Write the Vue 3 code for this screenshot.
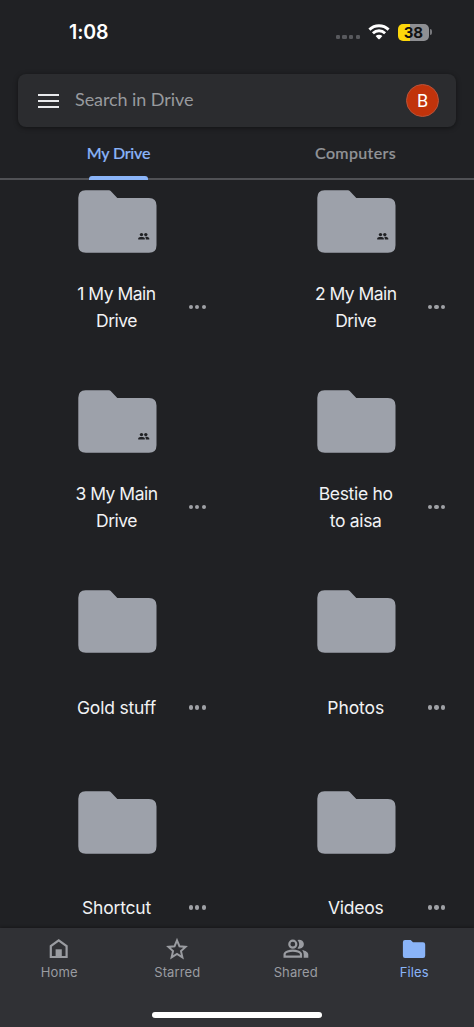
<script setup>
const folders = [
  { lines: [{ text: '1 My Main', spacing: -0.5 }, { text: 'Drive', spacing: -0.5 }], shared: true },
  { lines: [{ text: '2 My Main', spacing: -0.55 }, { text: 'Drive', spacing: -0.5 }], shared: true },
  { lines: [{ text: '3 My Main', spacing: -0.5 }, { text: 'Drive', spacing: -0.5 }], shared: true },
  { lines: [{ text: 'Bestie ho', spacing: -0.3 }, { text: 'to aisa', spacing: -0.35 }], shared: false },
  { lines: [{ text: 'Gold stuff', spacing: -0.2 }], shared: false },
  { lines: [{ text: 'Photos', spacing: -0.1 }], shared: false },
  { lines: [{ text: 'Shortcut', spacing: -0.2 }], shared: false },
  { lines: [{ text: 'Videos', spacing: -0.25 }], shared: false },
]
</script>

<template>
  <div class="screen">
    <header class="status">
      <span class="time">1:08</span>
      <div class="indicators">
        <div class="signal"><i></i><i></i><i></i><i></i></div>
        <svg class="wifi" width="22" height="16" viewBox="0 0 22 16">
          <g fill="none" stroke="#fff" stroke-width="2.9">
            <path d="M1.4 5.6C6.8.4 15.2.4 20.6 5.6" />
            <path d="M4.9 9.2C8.4 6 13.6 6 17.1 9.2" />
          </g>
          <path d="M7.6 11.9C9.5 10.2 12.5 10.2 14.4 11.9L11.7 14.9Q11 15.6 10.3 14.9Z" fill="#fff" />
        </svg>
        <div class="battery"><span>38</span></div>
        <div class="cap"></div>
      </div>
    </header>

    <div class="search">
      <div class="menu"><i></i><i></i><i></i></div>
      <span class="placeholder">Search in Drive</span>
      <div class="avatar">B</div>
    </div>

    <nav class="tabs">
      <div class="tab active"><span>My Drive</span></div>
      <div class="tab"><span>Computers</span></div>
    </nav>

    <main class="grid">
      <section v-for="(f, i) in folders" :key="i" class="cell">
        <svg class="folder" width="79" height="63" viewBox="0 0 79 63">
          <path d="M7.5 0.3H31Q32 0.3 32.7 1L39.3 8H71Q78.5 8 78.5 15.5V55.2Q78.5 62.7 71 62.7H7.8Q0.3 62.7 0.3 55.2V7.8Q0.3 0.3 7.5 0.3Z" fill="#9da1aa" />
          <g v-if="f.shared" fill="#202124">
            <circle cx="63.5" cy="44.6" r="1.7" />
            <circle cx="67.8" cy="44.6" r="1.7" />
            <path d="M60.2 49.6V48.6C60.2 47.2 62.2 46.9 63.5 46.9S66.8 47.2 66.8 48.6V49.6Z" />
            <path d="M67.8 49.6V48.4Q67.8 47.5 67.2 46.9C68.7 46.7 71.3 47.2 71.3 48.6V49.6Z" />
          </g>
        </svg>
        <div class="caption">
          <div class="name">
            <div v-for="l in f.lines" :key="l.text" :style="{ letterSpacing: l.spacing + 'px' }">{{ l.text }}</div>
          </div>
          <div class="more"><i></i><i></i><i></i></div>
        </div>
      </section>
    </main>

    <footer class="bottom">
      <div class="items">
        <div class="item">
          <svg width="28" height="24" viewBox="0 0 28 24">
            <path d="M5.8 20V9L13.7 3.3L21.6 9V20Z" fill="none" stroke="currentColor" stroke-width="2.2" />
            <path d="M10.6 12.3H16.8V20H10.6Z" fill="currentColor" />
          </svg>
          <span class="home-label">Home</span>
        </div>
        <div class="item">
          <svg width="28" height="24" viewBox="0 0 28 24">
            <path d="M14 3.4L16.5 9.3L22.6 9.9L18 14.1L19.4 20.3L14 17L8.6 20.3L10 14.1L5.4 9.9L11.5 9.3Z" fill="none" stroke="currentColor" stroke-width="2" />
          </svg>
          <span>Starred</span>
        </div>
        <div class="item">
          <svg width="28" height="24" viewBox="0 0 28 24">
            <g fill="none" stroke="currentColor" stroke-width="2.2">
              <circle cx="10.8" cy="7.2" r="3.5" />
              <path d="M2.6 19.700V17.300C2.600 14.800 8 13.600 10.800 13.600S19 14.800 19 17.300V19.700Z" />
            </g>
            <path d="M15.500 11.500Q19.800 12.300 21.300 9.600Q22.800 6 20.300 3.700Q18.200 2.200 15.500 2.900Q19 7.200 15.500 11.500Z" fill="currentColor" />
            <path d="M20.200 12.900C23.500 13.600 26.300 15 26.300 17.500V20.800H21.700V17.500Q21.700 14.800 20.200 12.900Z" fill="currentColor" />
          </svg>
          <span>Shared</span>
        </div>
        <div class="item active">
          <svg width="28" height="24" viewBox="0 0 28 24">
            <path d="M5 3H10.700L13 5.200H23Q25.200 5.200 25.200 7.400V18.800Q25.200 21 23 21H5Q2.900 21 2.900 18.800V5.200Q2.900 3 5 3Z" fill="currentColor" />
          </svg>
          <span>Files</span>
        </div>
      </div>
      <div class="home-bar"></div>
    </footer>
  </div>
</template>

<style>
body { margin: 0; background: #202124; }
</style>

<style scoped>
.screen {
  width: 474px;
  height: 1027px;
  overflow: hidden;
  display: flex;
  flex-direction: column;
  background: #202124;
  font-family: Inter, "Liberation Sans", sans-serif;
}
.status {
  flex: none;
  height: 74px;
  box-sizing: border-box;
  padding: 20px 42px 0 69px;
  display: flex;
  justify-content: space-between;
}
.time { color: #fff; font-size: 19.5px; line-height: 25px; font-weight: 600; letter-spacing: -0.1px; }
.indicators { display: flex; height: 24px; align-items: center; }
.signal { display: flex; gap: 2.4px; margin: 10px 7.5px 0 0; }
.signal i { width: 4.3px; height: 4.3px; border-radius: 1.2px; background: #58595d; }
.wifi { margin-right: 8px; }
.battery {
  width: 31.5px;
  height: 17px;
  border-radius: 5px;
  background: linear-gradient(90deg, #fdd70b 38%, #8e8f93 38%);
  color: #111;
  font-size: 15px;
  font-weight: 700;
  line-height: 17.5px;
  letter-spacing: -0.2px;
  text-align: center;
}
.cap { width: 2px; height: 6px; margin-left: 1px; border-radius: 0 2px 2px 0; background: #77787c; }
.search {
  flex: none;
  height: 53px;
  margin: 0 18px;
  box-sizing: border-box;
  padding: 0 17px 0 20px;
  display: flex;
  align-items: center;
  border-radius: 8px;
  background: #2b2c2f;
  box-shadow: 0 1px 5px rgba(0, 0, 0, 0.45);
}
.menu { width: 21px; display: flex; flex-direction: column; gap: 4px; }
.menu i { height: 2px; background: #e8e9ec; }
.placeholder {
  flex: 1;
  margin-left: 16px;
  padding-bottom: 3px;
  color: #989a9e;
  font-family: Lato, sans-serif;
  font-size: 18px;
  letter-spacing: -0.07px;
  line-height: 24px;
}
.avatar {
  width: 33px;
  height: 33px;
  box-sizing: border-box;
  border: 1px solid #b8533a;
  border-radius: 50%;
  background: #c1330b;
  color: #fff;
  font-family: Roboto, sans-serif;
  font-size: 18px;
  line-height: 32px;
  text-align: center;
}
.tabs {
  flex: none;
  height: 53px;
  box-sizing: border-box;
  display: flex;
  border-bottom: 2px solid #505155;
}
.tab {
  flex: 1;
  position: relative;
  color: #929498;
  font-family: Lato, sans-serif;
  font-size: 16px;
  font-weight: 500;
  line-height: 51px;
  text-align: center;
}
.tab span { letter-spacing: 0.35px; -webkit-text-stroke: 0.2px currentColor; }
.tab.active { color: #8ab4f8; }
.tab.active span { letter-spacing: -0.2px; }
.tab.active::after {
  content: "";
  position: absolute;
  left: 89px;
  bottom: -2px;
  width: 59px;
  height: 4px;
  border-radius: 3px 3px 0 0;
  background: #8ab4f8;
}
.grid {
  flex: 1;
  min-height: 0;
  overflow: hidden;
  display: grid;
  grid-template-columns: 239.2px 1fr;
  grid-auto-rows: 200.2px;
  padding-top: 10px;
}
.cell { padding-left: 78px; }
.folder { display: block; }
.caption { display: flex; align-items: center; height: 54px; margin-top: 28px; }
.name {
  width: 98px;
  margin-left: -10.5px;
  color: #f1f2f4;
  font-size: 17.5px;
  line-height: 26.7px;
  text-align: center;
  white-space: nowrap;
}
.more { display: flex; gap: 2.3px; margin: 0 0 2px 23px; }
.more i { width: 4.3px; height: 4.3px; border-radius: 50%; background: #9fa1a6; }
.bottom {
  flex: none;
  height: 99px;
  display: flex;
  flex-direction: column;
  align-items: center;
  background: #303135;
  box-shadow: 0 -1px 3px rgba(0, 0, 0, 0.3);
}
.items { width: 100%; display: flex; }
.item {
  flex: 1;
  padding: 9px 1px 0 0;
  display: flex;
  flex-direction: column;
  align-items: center;
  color: #9a9ca1;
  font-size: 13px;
  letter-spacing: 0.1px;
  line-height: 22px;
}
.item.active { color: #8ab4f8; }
.home-label { padding-left: 1px; }
.home-bar { width: 170px; height: 6px; margin-top: 29px; border-radius: 3px; background: #fff; }
</style>
